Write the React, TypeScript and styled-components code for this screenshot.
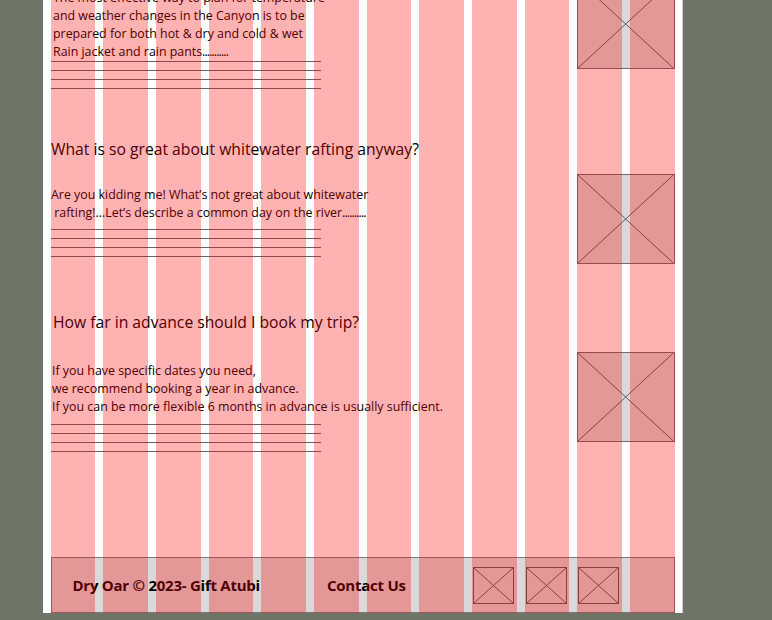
import {FC, ReactNode} from "react";
import styled, {createGlobalStyle} from "styled-components";

const GlobalStyle = createGlobalStyle`
  html, body {
    margin: 0;
    padding: 0;
    background: #6e7468;
    overflow: hidden;
  }
  body {
    font-family: "Open Sans", "Liberation Sans", sans-serif;
    color: #000;
  }
`;

interface Faq {
    question?: string;
    questionIndent?: number;
    questionGap?: number;
    rowGap: number;
    lines: ReactNode[];
    indent: number;
    textTop: number;
    rulesGap: number;
}

// built lazily so the styled parts below exist by the time it runs
const getFaqs = (): Faq[] => [
    {
        rowGap: 0,
        lines: [
            "The most effective way to plan for temperature",
            "and weather changes in the Canyon is to be",
            "prepared for both hot & dry and cold & wet",
            <>Rain jacket and rain pants<Dots>...........</Dots></>,
        ],
        indent: 2.5,
        textTop: 10,
        rulesGap: 0,
    },
    {
        question: "What is so great about whitewater rafting anyway?",
        questionIndent: 0.5,
        questionGap: 50,
        rowGap: 15,
        lines: [
            "Are you kidding me! What’s not great about whitewater",
            <>{"\u00a0rafting!...Let’s describe a common day on the river"}<Dots>..........</Dots></>,
        ],
        indent: 0.5,
        textTop: 12,
        rulesGap: 7,
    },
    {
        question: "How far in advance should I book my trip?",
        questionIndent: 2.5,
        questionGap: 48,
        rowGap: 20,
        lines: [
            "If you have specific dates you need,",
            "we recommend booking a year in advance.",
            "If you can be more flexible 6 months in advance is usually sufficient.",
        ],
        indent: 1.5,
        textTop: 10,
        rulesGap: 8,
    },
];

const Placeholder: FC<{className?: string}> = ({className}) => (
    <Frame className={className}>
        <svg width="100%" height="100%" viewBox="0 0 100 100" preserveAspectRatio="none">
            <line x1="0" y1="0" x2="100" y2="100" stroke="#5a5a5a" strokeWidth="1" vectorEffect="non-scaling-stroke"/>
            <line x1="100" y1="0" x2="0" y2="100" stroke="#5a5a5a" strokeWidth="1" vectorEffect="non-scaling-stroke"/>
        </svg>
    </Frame>
);

export default function App() {
    const faqs = getFaqs();
    return (
        <>
            <GlobalStyle/>
            <Page>
                <Content>
                    {faqs.map((f, i) => (
                        <Section key={i}>
                            {f.question && (
                                <Question $indent={f.questionIndent ?? 0} $gap={f.questionGap ?? 0}>{f.question}</Question>
                            )}
                            <Row $gap={f.rowGap}>
                                <TextCol $top={f.textTop}>
                                    <Para $indent={f.indent}>
                                        {f.lines.map((l, j) => <span key={j}>{l}</span>)}
                                    </Para>
                                    <Rules $gap={f.rulesGap}>
                                        <Rule/><Rule/><Rule/><Rule/>
                                    </Rules>
                                </TextCol>
                                <ImageCol>
                                    <Placeholder/>
                                </ImageCol>
                            </Row>
                        </Section>
                    ))}
                    <Footer>
                        <Brand>Dry Oar © 2023- Gift Atubi</Brand>
                        <Contact>Contact Us</Contact>
                        <SocialIcon $col={9}/>
                        <SocialIcon $col={10}/>
                        <SocialIcon $col={11}/>
                    </Footer>
                </Content>
                <Overlay>
                    {Array.from({length: 12}).map((_, i) => <OverlayCol key={i}/>)}
                </Overlay>
            </Page>
        </>
    );
}

const Page = styled.div`
  position: relative;
  width: 639px;
  margin: -21px 0 0 43px;
  background: #fff;
  box-shadow: 1px 0 0 #cfd1cc;
`;

const Content = styled.div`
  padding: 0 7.5px;
  display: flex;
  flex-direction: column;
`;

const Section = styled.section`
  display: flex;
  flex-direction: column;
`;

const Question = styled.h2<{ $indent: number; $gap: number }>`
  margin: ${p => p.$gap}px 0 0 ${p => p.$indent}px;
  font-size: 15.7px;
  font-weight: 500;
  line-height: 20px;
  color: #000;
`;

const Row = styled.div<{ $gap: number }>`
  margin-top: ${p => p.$gap}px;
  display: grid;
  grid-template-columns: repeat(12, 1fr);
  column-gap: 8px;
  align-items: start;
`;

const TextCol = styled.div<{ $top: number }>`
  grid-column: 1 / 11;
  padding-top: ${p => p.$top}px;
`;

const Para = styled.p<{ $indent: number }>`
  margin: 0 0 0 ${p => p.$indent}px;
  font-size: 12.4px;
  line-height: 18px;
  display: flex;
  flex-direction: column;
  white-space: nowrap;
`;

const Dots = styled.span`
  letter-spacing: -0.9px;
`;

const Rules = styled.div<{ $gap: number }>`
  margin-top: ${p => p.$gap}px;
  width: 270px;
  display: flex;
  flex-direction: column;
  gap: 8px;
`;

const Rule = styled.div`
  height: 1px;
  background: #666;
`;

const ImageCol = styled.div`
  grid-column: 11 / 13;
`;

const Frame = styled.div`
  box-sizing: border-box;
  height: 90px;
  background: #d9d9d9;
  border: 1px solid #6e6e6e;

  svg {
    display: block;
  }
`;

const Footer = styled.footer`
  box-sizing: border-box;
  margin-top: 105px;
  height: 56px;
  background: #d9d9d9;
  border: 1px solid #7a7a7a;
  display: grid;
  grid-template-columns: repeat(12, 1fr);
  column-gap: 8px;
  align-items: center;
  font-size: 15px;
  font-weight: 700;
  letter-spacing: -0.25px;
`;

const Brand = styled.div`
  grid-column: 1 / 6;
  padding-left: 21px;
  white-space: nowrap;
`;

const Contact = styled.div`
  grid-column: 6 / 9;
  padding-left: 13px;
  white-space: nowrap;
`;

const SocialIcon = styled(Placeholder)<{ $col: number }>`
  grid-column: ${p => p.$col};
  margin-left: 1.5px;
  width: 41px;
  height: 37px;
  background: transparent;
  border-color: #5a5a5a;
`;

const Overlay = styled.div`
  position: absolute;
  inset: 0;
  padding: 0 7.5px;
  display: grid;
  grid-template-columns: repeat(12, 1fr);
  column-gap: 8px;
  pointer-events: none;
`;

const OverlayCol = styled.div`
  background: rgba(255, 0, 0, 0.3);
`;
